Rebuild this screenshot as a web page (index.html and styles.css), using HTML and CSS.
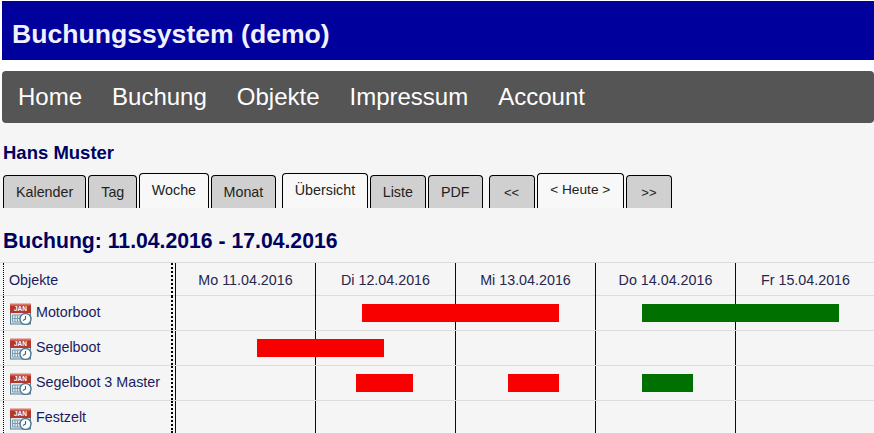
FILE: index.html
```html
<!DOCTYPE html>
<html lang="de">
  <head>
    <meta charset="UTF-8" />
    <meta name="viewport" content="width=device-width, initial-scale=1.0" />
    <title>Buchungssystem (demo)</title>
    <link rel="stylesheet" href="styles.css">
  </head>

  <body>
    <div class="top">
      <div class="header">Buchungssystem (demo)</div>
      <div class="nav">
        <a href="#">Home</a>
        <a href="#">Buchung</a>
        <a href="#">Objekte</a>
        <a href="#">Impressum</a>
        <a href="#">Account</a>
      </div>
    </div>

    <div class="content">
      <div class="user">Hans Muster</div>

      <div class="tabs">
        <a class="tab" href="#">Kalender</a>
        <a class="tab" href="#">Tag</a>
        <a class="tab active" href="#">Woche</a>
        <a class="tab" href="#">Monat</a>
        <a class="tab active group" href="#">Übersicht</a>
        <a class="tab" href="#">Liste</a>
        <a class="tab" href="#">PDF</a>
        <a class="tab group arrows" href="#">&lt;&lt;</a>
        <a class="tab active today" href="#">&lt; Heute &gt;</a>
        <a class="tab arrows" href="#">&gt;&gt;</a>
      </div>

      <h2 class="title">Buchung: 11.04.2016 - 17.04.2016</h2>

      <div class="chart">
        <div class="row head">
          <div class="name">Objekte</div>
          <div class="day">Mo 11.04.2016</div>
          <div class="day">Di 12.04.2016</div>
          <div class="day">Mi 13.04.2016</div>
          <div class="day">Do 14.04.2016</div>
          <div class="day">Fr 15.04.2016</div>
        </div>

        <div class="row item">
          <div class="name">
            <svg class="icon" viewBox="0 0 22 22">
              <rect x="0.5" y="3" width="20" height="18" fill="#dfe8ee" stroke="#5f7f93" />
              <rect x="0" y="2" width="21" height="8" fill="#b5372c" />
              <rect x="0" y="0.5" width="21" height="2" fill="#d9776a" />
              <text x="10.5" y="8" class="cal-text">JAN</text>
              <path d="M2.5 12h8v7h-8zM5 12v7M7.5 12v7M2.5 15.5h8" fill="none" stroke="#7f9db0" />
              <circle cx="15.5" cy="16" r="5.5" fill="#fff" stroke="#4f7a94" stroke-width="1.4" />
              <path d="M15.5 13v3l-2.5 1.5" fill="none" stroke="#4a5a66" stroke-width="1.1" />
            </svg>
            Motorboot
          </div>
          <div class="day"></div><div class="day"></div><div class="day"></div><div class="day"></div><div class="day"></div>
          <div class="bar red" style="left: 362px; width: 197px"></div>
          <div class="bar green" style="left: 642px; width: 197px"></div>
        </div>

        <div class="row item">
          <div class="name">
            <svg class="icon" viewBox="0 0 22 22">
              <rect x="0.5" y="3" width="20" height="18" fill="#dfe8ee" stroke="#5f7f93" />
              <rect x="0" y="2" width="21" height="8" fill="#b5372c" />
              <rect x="0" y="0.5" width="21" height="2" fill="#d9776a" />
              <text x="10.5" y="8" class="cal-text">JAN</text>
              <path d="M2.5 12h8v7h-8zM5 12v7M7.5 12v7M2.5 15.5h8" fill="none" stroke="#7f9db0" />
              <circle cx="15.5" cy="16" r="5.5" fill="#fff" stroke="#4f7a94" stroke-width="1.4" />
              <path d="M15.5 13v3l-2.5 1.5" fill="none" stroke="#4a5a66" stroke-width="1.1" />
            </svg>
            Segelboot
          </div>
          <div class="day"></div><div class="day"></div><div class="day"></div><div class="day"></div><div class="day"></div>
          <div class="bar red" style="left: 257px; width: 127px"></div>
        </div>

        <div class="row item">
          <div class="name">
            <svg class="icon" viewBox="0 0 22 22">
              <rect x="0.5" y="3" width="20" height="18" fill="#dfe8ee" stroke="#5f7f93" />
              <rect x="0" y="2" width="21" height="8" fill="#b5372c" />
              <rect x="0" y="0.5" width="21" height="2" fill="#d9776a" />
              <text x="10.5" y="8" class="cal-text">JAN</text>
              <path d="M2.5 12h8v7h-8zM5 12v7M7.5 12v7M2.5 15.5h8" fill="none" stroke="#7f9db0" />
              <circle cx="15.5" cy="16" r="5.5" fill="#fff" stroke="#4f7a94" stroke-width="1.4" />
              <path d="M15.5 13v3l-2.5 1.5" fill="none" stroke="#4a5a66" stroke-width="1.1" />
            </svg>
            Segelboot 3 Master
          </div>
          <div class="day"></div><div class="day"></div><div class="day"></div><div class="day"></div><div class="day"></div>
          <div class="bar red" style="left: 356px; width: 57px"></div>
          <div class="bar red" style="left: 508px; width: 51px"></div>
          <div class="bar green" style="left: 642px; width: 51px"></div>
        </div>

        <div class="row item last">
          <div class="name">
            <svg class="icon" viewBox="0 0 22 22">
              <rect x="0.5" y="3" width="20" height="18" fill="#dfe8ee" stroke="#5f7f93" />
              <rect x="0" y="2" width="21" height="8" fill="#b5372c" />
              <rect x="0" y="0.5" width="21" height="2" fill="#d9776a" />
              <text x="10.5" y="8" class="cal-text">JAN</text>
              <path d="M2.5 12h8v7h-8zM5 12v7M7.5 12v7M2.5 15.5h8" fill="none" stroke="#7f9db0" />
              <circle cx="15.5" cy="16" r="5.5" fill="#fff" stroke="#4f7a94" stroke-width="1.4" />
              <path d="M15.5 13v3l-2.5 1.5" fill="none" stroke="#4a5a66" stroke-width="1.1" />
            </svg>
            Festzelt
          </div>
          <div class="day"></div><div class="day"></div><div class="day"></div><div class="day"></div><div class="day"></div>
        </div>
      </div>
    </div>
  </body>
</html>
```

FILE: styles.css
```css
html,
body {
  margin: 0;
  padding: 0;
}

body {
  width: 874px;
  height: 433px;
  overflow: hidden;
  font-family: "Liberation Sans", Arial, sans-serif;
  background-color: #f5f5f5;
  color: #000060;
}

.top {
  background-color: #fff;
  padding: 1px 0 0 2px;
}

.header {
  height: 59px;
  line-height: 66px;
  margin-bottom: 11px;
  padding-left: 10px;
  background-color: #00009c;
  color: #f0f0ff;
  font-size: 26.6px;
  font-weight: bold;
}

.nav {
  display: flex;
  height: 52px;
  padding-left: 1px;
  background-color: #555;
  border-radius: 4px;
}

.nav a {
  padding: 0 15px;
  color: #fff;
  font-size: 24px;
  line-height: 52px;
  text-decoration: none;
}

.content {
  padding: 0 0 0 3px;
}

.user {
  height: 50px;
  line-height: 60px;
  font-size: 18.5px;
  font-weight: bold;
}

.tabs {
  display: flex;
  align-items: flex-end;
  gap: 2px;
  height: 35px;
}

.tab {
  display: block;
  height: 33px;
  line-height: 33px;
  padding: 0 12px;
  box-sizing: border-box;
  background-color: #d0d0d0;
  border: 1px solid #000;
  border-bottom: none;
  border-radius: 4px 4px 0 0;
  color: #222;
  font-size: 14.3px;
  text-decoration: none;
}

.tab.active {
  height: 35px;
  line-height: 32px;
  padding: 0 11.5px;
  background-color: #f8f8f8;
}

.tab.group {
  margin-left: 4px;
}

.tab.arrows {
  font-size: 13px;
  padding: 0 14.5px;
}

.tab.today {
  font-size: 13.7px;
  padding: 0 12.5px;
}

.title {
  margin: 0;
  height: 54px;
  line-height: 66px;
  font-size: 21.2px;
  font-weight: bold;
}

.cal-text {
  font-size: 6.5px;
  font-weight: bold;
  fill: #fff;
  text-anchor: middle;
}

.chart {
  margin-left: -3px;
  border-top: 1px solid #ddd;
}

.row {
  position: relative;
  display: grid;
  grid-template-columns: 175px repeat(5, 140px);
  width: 875px;
  box-sizing: border-box;
  border-bottom: 1px solid #ddd;
}

.row.head {
  height: 33px;
}

.row.item {
  height: 35px;
}

.row.last {
  height: 33px;
  border-bottom: 1px solid #ccc;
}

.name {
  display: flex;
  align-items: center;
  gap: 4px;
  padding-left: 5px;
  margin-left: 3px;
  box-sizing: border-box;
  width: 170px;
  border-left: 1px dotted #000;
  border-right: 2px dotted #000;
  font-size: 14.3px;
  color: #1a1a60;
}

.icon {
  flex: none;
  width: 22px;
  height: 22px;
  margin-left: 1px;
}

.item .name {
  align-items: flex-start;
  padding-top: 7px;
  line-height: 19px;
}

.day {
  border-left: 1px solid #000060;
  text-align: center;
  font-size: 14.3px;
  line-height: 34px;
  color: #26264f;
}

.bar {
  position: absolute;
  top: 8px;
  height: 18px;
}

.red {
  background-color: #f80000;
}

.green {
  background-color: #007000;
}
```
